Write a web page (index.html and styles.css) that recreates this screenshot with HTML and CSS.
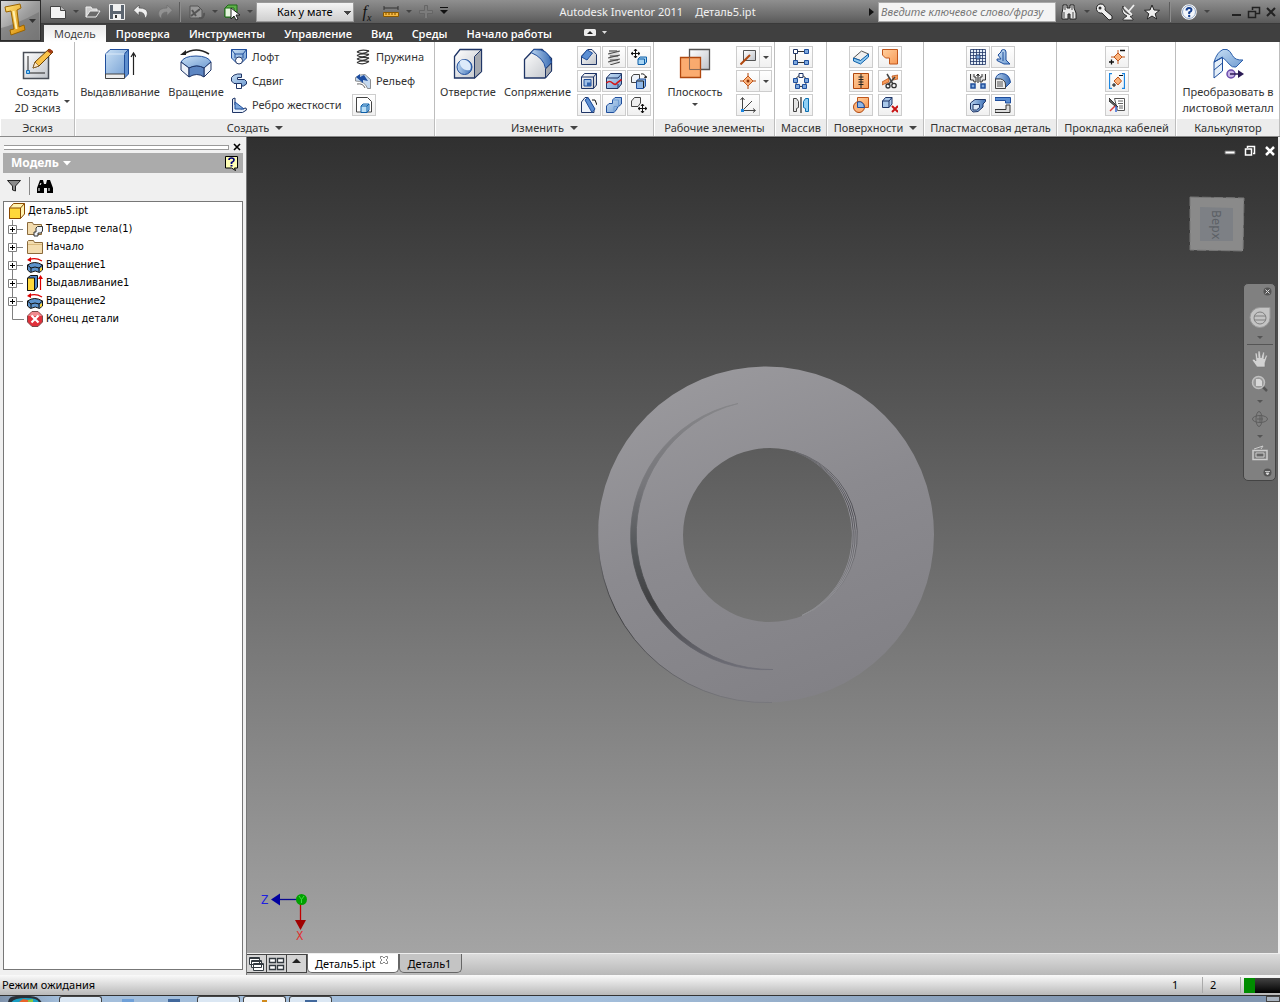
FILE: index.html
```html
<!DOCTYPE html>
<html lang="ru">
<head>
<meta charset="utf-8">
<title>Autodesk Inventor 2011 — Деталь5.ipt</title>
<link rel="stylesheet" href="styles.css">
</head>
<body>
<svg class="defs" aria-hidden="true">
  <defs>
    <linearGradient id="gBlue" x1="0" y1="0" x2="1" y2="1"><stop offset="0" stop-color="#c9e0f5"/><stop offset="1" stop-color="#6f9bd1"/></linearGradient>
    <linearGradient id="gDeep" x1="0" y1="0" x2="1" y2="0"><stop offset="0" stop-color="#b9d3ef"/><stop offset="1" stop-color="#3d6fb5"/></linearGradient>
    <linearGradient id="gGrey" x1="0" y1="0" x2="1" y2="1"><stop offset="0" stop-color="#ffffff"/><stop offset="1" stop-color="#bfc3c9"/></linearGradient>
    <linearGradient id="gOrange" x1="0" y1="0" x2="1" y2="1"><stop offset="0" stop-color="#ffcf9e"/><stop offset="1" stop-color="#f89a56"/></linearGradient>
    <linearGradient id="gGold" x1="0" y1="0" x2="1" y2="1"><stop offset="0" stop-color="#ffe27a"/><stop offset="1" stop-color="#d98a00"/></linearGradient>
    <linearGradient id="gPart" x1="0.2" y1="0" x2="0.6" y2="1"><stop offset="0" stop-color="#9b9a9e"/><stop offset="0.5" stop-color="#8b8a8f"/><stop offset="1" stop-color="#828186"/></linearGradient>
    <linearGradient id="gGroove" x1="0" y1="0" x2="0" y2="1"><stop offset="0" stop-color="#858588"/><stop offset="0.3" stop-color="#77777b"/><stop offset="0.55" stop-color="#54575a"/><stop offset="0.75" stop-color="#404042"/><stop offset="1" stop-color="#6f6f78"/></linearGradient>
    <linearGradient id="gRim" x1="0" y1="0" x2="0" y2="1"><stop offset="0" stop-color="#7c7c80"/><stop offset="0.5" stop-color="#3f3f42"/><stop offset="1" stop-color="#77777c"/></linearGradient>
    <linearGradient id="gThread" x1="0" y1="0" x2="0" y2="1"><stop offset="0" stop-color="#6a6a6e"/><stop offset="0.35" stop-color="#3c3c42"/><stop offset="0.65" stop-color="#66666b"/><stop offset="1" stop-color="#909094"/></linearGradient>
  </defs>
</svg>

<header class="titlebar">
  <button class="app-button" aria-label="Меню приложения">
    <svg width="38" height="38" viewBox="0 0 38 38"><path d="M0 26Q16 22 38 10V38H0z" fill="#6f6f6f" opacity=".55"/><path d="m4 5 15-3 1 4-4 2 2 17 5-2 1 5-14 5-1-5 4-1L10 9l-5 1z" fill="url(#gGold)" stroke="#9b6400"/><path d="M12.500 9l3 18" stroke="#fff0b0" stroke-width="2"/><path d="M28 17h7l-3.500 4z" fill="#333"/></svg>
  </button>
  <nav class="quick" aria-label="Быстрый доступ">
    <button class="tool" aria-label="Новый"><svg width="16" height="16" viewBox="0 0 16 16"><path d="M.5 2.500h10l5 4v8H.5z" fill="#f4f4f4" stroke="#444"/><path d="M10.500 2.500v4h5" fill="#bbb" stroke="#444"/></svg></button>
    <button class="drop dim" aria-label="Ещё"></button>
    <button class="tool" aria-label="Открыть"><svg width="16" height="16" viewBox="0 0 16 16"><path d="M1 13V3h5l1 2h5v3" fill="#ccc" stroke="#eee"/><path d="M1 13 5 7h10l-4 6z" fill="#6a6a6a" stroke="#eee"/></svg></button>
    <button class="tool" aria-label="Сохранить"><svg width="16" height="16" viewBox="0 0 16 16"><path d="M.5.500h15v15H.5z" fill="#5c6570" stroke="#f0f0f0"/><path d="M4 1h8v6H4z" fill="#f0f0f0"/><path d="M4 10h8v5H4z" fill="#f0f0f0"/><path d="M6 11h2v3H6z" fill="#333"/></svg></button>
    <button class="tool" aria-label="Отменить"><svg width="16" height="16" viewBox="0 0 16 16"><path d="M6 1v3q8 0 8.500 5 0 3.500-3 5.500 1-6.500-5.500-6.500v3.500L.5 6.200z" fill="#efefef" stroke="#444" stroke-width=".6"/></svg></button>
    <button class="tool" aria-label="Повторить"><svg width="16" height="16" viewBox="0 0 16 16"><path d="M10 1v3q-8 0-8.500 5 0 3.500 3 5.500-1-6.500 5.500-6.500v3.500l5.500-5.300z" fill="#929292" stroke="#6b6b6b" stroke-width=".6"/></svg></button>
    <span class="split"></span>
    <button class="tool" aria-label="Эскиз"><svg width="18" height="16" viewBox="0 0 18 16"><path d="M2 2h8l4 4v8H2z" fill="#999" stroke="#555"/><path d="M3 12 12 5M4 6l4 6" stroke="#555" stroke-width="2"/><path d="M11 14a4 4 0 0 0 5-5" fill="none" stroke="#555" stroke-width="2"/></svg></button>
    <button class="drop dim" aria-label="Ещё"></button>
    <button class="tool" aria-label="Выбор"><svg width="18" height="18" viewBox="0 0 18 18"><path d="M2 5 5 2h9v9l-3 3H2z" fill="#5fb14a" stroke="#1d6b14"/><path d="M2 5h9v9H2z" fill="#e3f3dc" stroke="#1d6b14"/><path d="M8 5v11l3-3 2 4 2-1-2-4h4z" fill="#fff" stroke="#222"/></svg></button>
    <button class="drop dim" aria-label="Ещё"></button>
    <select class="combo" aria-label="Цвет"><option>Как у мате</option></select>
    <button class="tool fx" aria-label="Параметры"><i>f<sub>x</sub></i></button>
    <button class="tool" aria-label="Измерить"><svg width="16" height="16" viewBox="0 0 16 16"><path d="M1 4h14M1 2v4M15 2v4" stroke="#333"/><path d="M.5 8.500h15v4H.5z" fill="#f5b942" stroke="#8c5a00"/><path d="M3 9v2M6 9v2M9 9v2M12 9v2" stroke="#7a4a00"/></svg></button>
    <button class="drop dim" aria-label="Ещё"></button>
    <button class="tool" aria-label="Добавить"><svg width="16" height="16" viewBox="0 0 16 16"><path d="M6.500 1.500h3v5h5v3h-5v5h-3v-5h-5v-3h5z" fill="#7c7c7c" stroke="#666"/></svg></button>
    <button class="drop custom" aria-label="Настройка панели"></button>
  </nav>
  <h1 class="app-title"><span>Autodesk Inventor 2011</span><span>Деталь5.ipt</span></h1>
  <div class="info">
    <button class="drop side" aria-label="Свернуть поиск"></button>
    <input class="search" type="text" placeholder="Введите ключевое слово/фразу" aria-label="Поиск">
    <button class="tool" aria-label="Найти"><svg width="18" height="18" viewBox="0 0 18 18"><path d="M3 2h4v3h3V2h4v3l2 5v6h-6v-5H8v5H2v-6l1-5z" fill="#e8e8e8" stroke="#222"/><path d="M4 9v6M13 9v6M5 3v4M12 3v4" stroke="#444"/></svg></button>
    <button class="drop dim" aria-label="Ещё"></button>
    <button class="tool" aria-label="Вход"><svg width="18" height="18" viewBox="0 0 18 18"><path d="M5 1a4.500 4.500 0 0 1 5 6l7 6v3l-3 1-7-7A4.500 4.500 0 1 1 5 1z" fill="#efefef" stroke="#222"/><circle cx="5" cy="5" r="1.500" fill="#333"/></svg></button>
    <button class="tool" aria-label="Центр связи"><svg width="16" height="18" viewBox="0 0 16 18"><path d="M3 3q0 8 10 9l-3 1.500 3 2.500v1H3v-1l4-3Q0 10 3 3z" fill="#efefef" stroke="#222" stroke-width=".8"/><path d="M9 8l5-6M4 4l8 8" stroke="#efefef" stroke-width="1.800"/></svg></button>
    <button class="tool" aria-label="Избранное"><svg width="16" height="16" viewBox="0 0 16 16"><path d="m8 1 2 5 5.500.3-4.300 3.500L12.700 15 8 12l-4.700 3 1.500-5.200L.5 6.300 6 6z" fill="#eee" stroke="#222"/></svg></button>
    <span class="split"></span>
    <button class="tool" aria-label="Справка"><svg width="16" height="16" viewBox="0 0 16 16"><circle cx="8" cy="8" r="7" fill="#f4f7fb" stroke="#fff" stroke-width="1.500"/><circle cx="8" cy="8" r="6.500" fill="none" stroke="#8fa5c4"/><path d="M5.500 6.500q0-2.500 2.500-2.500t2.500 2q0 1.300-2.300 2.400V10" fill="none" stroke="#17408f" stroke-width="2"/><circle cx="8.200" cy="12" r="1.200" fill="#17408f"/></svg></button>
    <button class="drop dim" aria-label="Ещё"></button>
  </div>
  <div class="win">
    <button aria-label="Свернуть"><svg width="14" height="14" viewBox="0 0 14 14"><path d="M2 9h9v2H2z" fill="#222"/></svg></button>
    <button aria-label="Восстановить"><svg width="14" height="14" viewBox="0 0 14 14"><path d="M5.500 5V2.500h7v6H9M1.500 6.500h7v6h-7z" fill="none" stroke="#222" stroke-width="1.500"/></svg></button>
    <button aria-label="Закрыть"><svg width="14" height="14" viewBox="0 0 14 14"><path d="m3 3 8 8M11 3l-8 8" stroke="#222" stroke-width="2"/></svg></button>
  </div>
</header>

<nav class="tabs" aria-label="Лента">
  <button class="tab active">Модель</button>
  <button class="tab">Проверка</button>
  <button class="tab">Инструменты</button>
  <button class="tab">Управление</button>
  <button class="tab">Вид</button>
  <button class="tab">Среды</button>
  <button class="tab">Начало работы</button>
  <button class="collapse" aria-label="Свернуть ленту"><svg width="24" height="8" viewBox="0 0 24 8"><rect x="1" y="0" width="12" height="7" rx="1.500" fill="#ececec"/><path d="M4 5h6L7 2z" fill="#222"/><path d="M19 2h5l-2.500 3z" fill="#ddd"/></svg></button>
</nav>

<section class="ribbon" aria-label="Инструменты модели">
  <div class="group">
    <div class="body middle">
      <button class="big"><svg width="32" height="32" viewBox="0 0 32 32"><path d="M1.500 4.500h25v26h-25z" fill="url(#gGrey)" stroke="#4a4f58" stroke-width="1.500"/><path d="M6 8v17h17" fill="none" stroke="#222"/><path d="M4.500 22.500h3v3h-3z" fill="#8fd0f5" stroke="#0e6fc0"/><path d="m11 20 2-6L27 1l4 3-14 14z" fill="#f9c24a" stroke="#6b4206"/><path d="m11 20 2-6 4 4z" fill="#fbe8c9" stroke="#6b4206" stroke-width=".6"/><path d="m25 3 4 3 2-3-3-2z" fill="#a53b16"/></svg><span>Создать<br>2D эскиз</span><span class="tick corner"></span></button>
    </div>
    <h2>Эскиз</h2>
  </div>

  <div class="group">
    <div class="body create">
      <button class="big"><svg width="32" height="32" viewBox="0 0 32 32"><path d="M1.500 6 6 1.500h18.500l-4 4.500V30h-19z" fill="url(#gBlue)" stroke="#1f4e9c"/><path d="M20.500 6l4-4.500V26l-4 4z" fill="#5f8fce" stroke="#1f4e9c"/><path d="M1.500 6h19" stroke="#dbe9f8"/><path d="M1.500 26h19v4.500h-19z" fill="#eee" stroke="#444"/><path d="M29.500 27V6M27 9l2.500-4L32 9" fill="none" stroke="#222" stroke-width="1.200"/></svg><span>Выдавливание</span></button>
      <button class="big second"><svg width="32" height="32" viewBox="0 0 32 32"><path d="M4 6q12-8 25 0" fill="none" stroke="#222" stroke-width="1.500"/><path d="M0 7 6 2v5z" fill="#222"/><path d="M1 14q3-6 15-6t15 6l-7 6q-7-4-15 0z" fill="url(#gBlue)" stroke="#1f4e9c"/><path d="M1 14v8l8 7v-9zM31 14v8l-7 7v-9z" fill="#eef3fa" stroke="#1f3566"/><path d="M9 20q8-4 15 0v9q-7-5-15 0z" fill="#5d86c2" stroke="#1f3566"/></svg><span>Вращение</span></button>
      <div class="list">
        <button class="item"><svg width="16" height="16" viewBox="0 0 16 16"><path d="M.5.500h15V9L11 13.500H5L.5 9z" fill="url(#gBlue)" stroke="#1f4e9c"/><path d="M.5.500 4 5h8L15.500.5M4 5v4M12 5v4" fill="none" stroke="#1f4e9c"/><circle cx="8" cy="11.500" r="3.500" fill="#fff" stroke="#1f3566"/></svg>Лофт</button>
        <button class="item"><svg width="16" height="16" viewBox="0 0 16 16"><path d="M.5 4.500q2-3 6-3.500h4v3.500H6.500v2h7l2 2v2.500l-3 2H7v-2.500H3L.5 8z" fill="url(#gBlue)" stroke="#1f3566"/><path d="M5.500 10.500h5v5h-5z" fill="#fff" stroke="#1f3566"/></svg>Сдвиг</button>
        <button class="item"><svg width="16" height="16" viewBox="0 0 16 16"><path d="M1.500 2 4 1v7l6 4 5-1 .5 2-4 2.500h-10z" fill="#e8f0fa" stroke="#1f3566"/><path d="M4 5v7h9z" fill="#7ea8dc" stroke="#1f4e9c"/></svg>Ребро жесткости</button>
      </div>
      <div class="list last">
        <button class="item"><svg width="16" height="16" viewBox="0 0 16 16"><path d="M2 3q6 3 12-1M2 6.500q6 3 12-1M2 10q6 3 12-1M2 13.500q6 3 12-1M2 3q4-3 12-1M2 6.500Q6 4 14 5.500M2 10q4-2.500 12-1M2 13.500Q6 11 14 12.500" fill="none" stroke="#333" stroke-width="1.300"/></svg>Пружина</button>
        <button class="item"><svg width="16" height="16" viewBox="0 0 16 16"><path d="M.5 4.500Q5 1 10 1.500l5.500 5v9h-3Q10 8 .5 8z" fill="#c5d9ef" stroke="#777" stroke-width=".8"/><path d="m1 4 4-3v3l4-2 4 6-5-1v3z" fill="#1c4da0"/><path d="M2 11q6-1 8 4" fill="none" stroke="#666"/></svg>Рельеф</button>
        <button class="sq" aria-label="Производный компонент"><svg width="16" height="16" viewBox="0 0 16 16"><path d="M.5.500h11l4 4v10.500h-15z" fill="#fff" stroke="#444"/><path d="m5 9 2-2h6v6l-2 2.500H5z" fill="#b9def6" stroke="#0c5ea8"/><path d="M5 9h6v6.500M11 9l2-2" fill="none" stroke="#0c5ea8"/></svg></button>
      </div>
    </div>
    <h2>Создать<span class="more"></span></h2>
  </div>

  <div class="group">
    <div class="body modify">
      <button class="big"><svg width="32" height="32" viewBox="0 0 32 32"><path d="M2.500 8.500 8 1.500h21.500v22l-7 6.500h-20z" fill="url(#gGrey)" stroke="#1f3566" stroke-width="1.300"/><path d="M22.500 8.500l7-7v22l-7 6.500z" fill="#a5a9b0" stroke="#1f3566"/><circle cx="12.500" cy="19" r="7.500" fill="url(#gDeep)" stroke="#1f4e9c"/><path d="M8 13a7 7 0 0 1 10 9 8 8 0 0 1-10-9z" fill="#dceafa"/></svg><span>Отверстие</span></button>
      <button class="big wide"><svg width="32" height="32" viewBox="0 0 32 32"><path d="M2.500 11.500 12 1.500h8l9.500 9v12l-6.500 7.500h-20.500z" fill="url(#gGrey)" stroke="#1f3566" stroke-width="1.300"/><path d="M12 1.500q15-1 17.500 13l-6 6Q22 10 9 4.500z" fill="url(#gDeep)" stroke="#1f4e9c"/><path d="M23.500 21l6-6v8l-6 7z" fill="#a5a9b0" stroke="#1f3566"/></svg><span>Сопряжение</span></button>
      <div class="grid three">
        <button class="sq" aria-label="Фаска"><svg width="16" height="16" viewBox="0 0 16 16"><path d="M.5 7 7 .5h4l4.500 5V15.500H.5z" fill="url(#gGrey)" stroke="#1f3566"/><path d="M.5 8 6 .8 11.500 4 6 11z" fill="#5c8fd3" stroke="#1f4e9c"/></svg></button>
        <button class="sq" aria-label="Резьба"><svg width="16" height="16" viewBox="0 0 16 16"><path d="M3 1h10v14H3z" fill="#ddd"/><path d="m2 5 12-3M2 9l12-3M2 13l12-3M4 16l10-3M3 2h8M4 7h8M4 11h8" stroke="#444" fill="none"/></svg></button>
        <button class="sq" aria-label="Переместить тела"><svg width="16" height="16" viewBox="0 0 16 16"><path d="M4.500 0v9M0 4.500h9M3 2l1.500-2L6 2M3 7l1.500 2L6 7M2 3 0 4.500 2 6M7 3l2 1.500L7 6" fill="none" stroke="#111"/><path d="m7 10 2-2h6.500v5l-2 2.500H7z" fill="#a8d4f3" stroke="#0c5ea8"/><path d="M7 10h6.500v5.500" fill="none" stroke="#0c5ea8"/></svg></button>
        <button class="sq" aria-label="Оболочка"><svg width="16" height="16" viewBox="0 0 16 16"><path d="m.5 4 3-3.500h12V12l-3 3.500H.5z" fill="url(#gGrey)" stroke="#1f3566"/><path d="M.5 4h12v11.500M12.500 4l3-3.500" fill="none" stroke="#1f3566"/><path d="M3 6.500h7V13H3z" fill="#9fc0e8" stroke="#1f4e9c"/><path d="M6 9.500h4V13H6z" fill="#2f62ad"/></svg></button>
        <button class="sq" aria-label="Разделить"><svg width="16" height="16" viewBox="0 0 16 16"><path d="m.5 5 4-4.500h11V11l-3.500 4.500H.5z" fill="url(#gBlue)" stroke="#1f3566"/><path d="M.5 5H12l3.500-4M12 11v4" fill="none" stroke="#1f3566"/><path d="M.5 10q3-3 6 0t5-.5l4-3" fill="none" stroke="#d31818" stroke-width="1.600"/></svg></button>
        <button class="sq" aria-label="Копировать объект"><svg width="16" height="16" viewBox="0 0 16 16"><path d="m.5 4 2-2.500h6v5l-2 3h-6z" fill="#eef3fa" stroke="#444"/><path d="m5.500 8 2-2h7v7l-2 2.500h-7z" fill="#8fb7e6" stroke="#1f4e9c"/><path d="M5.500 8h7v7M10 1q4-1 5 4m-2-1 2 1 1-2" fill="none" stroke="#222"/></svg></button>
        <button class="sq" aria-label="Наклон"><svg width="16" height="16" viewBox="0 0 16 16"><path d="M.5 5 4 .5h3l6 11v4H.5z" fill="#eef3fa" stroke="#1f3566"/><path d="M4 3 7 .5 14 12l-3 3.500z" fill="#5c8fd3" stroke="#1f4e9c"/><path d="M11 3h3l2 5" fill="none" stroke="#111"/></svg></button>
        <button class="sq" aria-label="Объединить"><svg width="16" height="16" viewBox="0 0 16 16"><path d="M6.500 3 9 .5h6.500V7L11 11v1l-3 3.500H.5V9L3 6.500h3.500z" fill="url(#gBlue)" stroke="#1f4e9c"/><path d="M6.500 3h6v6.500H8v6" fill="none" stroke="#6f9bd1"/></svg></button>
        <button class="sq" aria-label="Переместить грань"><svg width="16" height="16" viewBox="0 0 16 16"><path d="m.5 4 3-3.500h6V6L7 9.500H.5z" fill="#eee" stroke="#444"/><path d="M11.500 7v9M7 11.500h9M10 9l1.500-2L13 9M10 14l1.500 2 1.500-2M9 10l-2 1.500L9 13M14 10l2 1.500-2 1.500" fill="none" stroke="#111"/></svg></button>
      </div>
    </div>
    <h2>Изменить<span class="more"></span></h2>
  </div>

  <div class="group">
    <div class="body work">
      <button class="big"><svg width="32" height="32" viewBox="0 0 32 32"><path d="M10.500 1.500h20v20h-20z" fill="url(#gGrey)" stroke="#555" stroke-width="1.300"/><path d="M1.500 9.500h20v20h-20z" fill="#fba564" fill-opacity=".92" stroke="#b0480f" stroke-width="1.300"/><path d="M10.500 9.500v12h11" fill="none" stroke="#8a6b58"/></svg><span>Плоскость</span><span class="tick"></span></button>
      <div class="list">
        <div class="pair"><button class="sq" aria-label="Ось"><svg width="16" height="16" viewBox="0 0 16 16"><path d="M3.500 1.500h12v10h-12z" fill="url(#gGrey)" stroke="#555"/><path d="M.5 15.500 10 6" stroke="#b0480f" stroke-width="2"/></svg></button><button class="sq narrow" aria-label="Варианты оси"><span class="tick"></span></button></div>
        <div class="pair"><button class="sq" aria-label="Точка"><svg width="16" height="16" viewBox="0 0 16 16"><path d="m8 3 5 5-5 5-5-5z" fill="#fbb27a" stroke="#c0561c"/><path d="M8 0v3M8 13v3M0 8h3M13 8h3" stroke="#b0480f"/><circle cx="8" cy="8" r="1.500" fill="#8d3207"/></svg></button><button class="sq narrow" aria-label="Варианты точки"><span class="tick"></span></button></div>
        <button class="sq" aria-label="ПСК"><svg width="16" height="16" viewBox="0 0 16 16"><path d="M2.500 1v12.500H15M.5 3l2-2.500 2 2.500M13 11.500l2.500 2-2.500 2M3 13 12 4" fill="none" stroke="#444"/><path d="M1 12h3v3H1z" fill="#1c86e0"/></svg></button>
      </div>
    </div>
    <h2>Рабочие элементы</h2>
  </div>

  <div class="group">
    <div class="body middle">
      <div class="list">
        <button class="sq" aria-label="Прямоугольный массив"><svg width="16" height="16" viewBox="0 0 16 16"><path d="M2.500 3v10M3 2.500h10M3 13.500h10" stroke="#333" fill="none"/><path d="M.5.500h4v4h-4z" fill="#fff" stroke="#1f3566"/><path d="M11.500.5h4v4h-4zM.5 11.500h4v4h-4zM11.500 11.500h4v4h-4z" fill="#7ea8dc" stroke="#1f4e9c"/></svg></button>
        <button class="sq" aria-label="Круговой массив"><svg width="16" height="16" viewBox="0 0 16 16"><circle cx="8" cy="8" r="5.500" fill="none" stroke="#333"/><path d="M6 .5h4v4H6z" fill="#fff" stroke="#1f3566"/><path d="M.5 5.500h4v4h-4zM11.500 5.500h4v4h-4zM2.500 11.500h4v4h-4zM9.500 11.500h4v4h-4z" fill="#7ea8dc" stroke="#1f4e9c"/></svg></button>
        <button class="sq" aria-label="Зеркальное отражение"><svg width="16" height="16" viewBox="0 0 16 16"><path d="M.5 1.500h3l2 3v6l-2 1v3h-3z" fill="#e4e4e4" stroke="#444"/><path d="M15.500 1.500h-3l-2 3v6l2 1v3h3z" fill="#8fd0f5" stroke="#0c6fb0"/><path d="M8 0v16" stroke="#222" stroke-width="1.200"/></svg></button>
      </div>
    </div>
    <h2>Массив</h2>
  </div>

  <div class="group">
    <div class="body middle">
      <div class="grid two spaced">
        <button class="sq" aria-label="Толщина"><svg width="16" height="16" viewBox="0 0 16 16"><path d="m.5 9 8-7 7 3L9 12z" fill="#f0f0f0" stroke="#555"/><path d="m.5 9 7 2.500 8-6.500v3l-8 7-7-3z" fill="#8fc7ee" stroke="#0c5ea8"/></svg></button>
        <button class="sq" aria-label="Сшить"><svg width="16" height="16" viewBox="0 0 16 16"><path d="M.5.500h15v14.500h-8V9h-4l-3-3z" fill="url(#gOrange)" stroke="#c0561c"/></svg></button>
        <button class="sq" aria-label="Сшивка"><svg width="16" height="16" viewBox="0 0 16 16"><path d="M.5.500h15v15H.5z" fill="url(#gOrange)" stroke="#b0480f"/><path d="M8 1v14M5.500 4h5M5.500 6.500h5M5.500 9h5M5.500 11.500h5" stroke="#222"/></svg></button>
        <button class="sq" aria-label="Обрезать"><svg width="16" height="16" viewBox="0 0 16 16"><path d="M0 9 7 5v4l-7 3zM10 3l6-1v4l-5 1z" fill="#f89a56" stroke="#b0480f" stroke-width=".7"/><path d="m5 1 6 10M13 4l-7 8" stroke="#444" stroke-width="1.500"/><circle cx="12" cy="12.500" r="2.200" fill="none" stroke="#333" stroke-width="1.300"/><circle cx="6" cy="13" r="2" fill="none" stroke="#333" stroke-width="1.300"/></svg></button>
        <button class="sq" aria-label="Заплатка"><svg width="16" height="16" viewBox="0 0 16 16"><path d="M4.500.5h11v10h-11z" fill="url(#gOrange)" stroke="#c0561c"/><circle cx="6" cy="10" r="5.500" fill="#fbb27a" stroke="#b0480f"/><path d="M4.500 5q6-1.500 7 5.500h-7z" fill="#8fb7e6" stroke="#1f4e9c"/></svg></button>
        <button class="sq" aria-label="Удалить грань"><svg width="16" height="16" viewBox="0 0 16 16"><path d="m.5 4 3-3.500h6.500V7L7 10.500H.5z" fill="#a9c8ea" stroke="#1f3566"/><path d="M.5 4H7v6.500M7 4l3-3.500" fill="none" stroke="#1f3566"/><path d="m10 9 6 6M16 9l-6 6" stroke="#c81414" stroke-width="2"/></svg></button>
      </div>
    </div>
    <h2>Поверхности<span class="more"></span></h2>
  </div>

  <div class="group">
    <div class="body middle">
      <div class="grid two">
        <button class="sq" aria-label="Решетка"><svg width="16" height="16" viewBox="0 0 16 16"><path d="M.5.500h15v15H.5zM3.500 0v16M6.500 0v16M9.500 0v16M12.500 0v16M0 3.500h16M0 6.500h16M0 9.500h16M0 12.500h16" fill="#e4eef8" stroke="#1f3566" stroke-width=".8"/><path d="M6 6h4v4H6z" fill="#7ea8dc" stroke="#1f3566"/></svg></button>
        <button class="sq" aria-label="Бобышка"><svg width="16" height="16" viewBox="0 0 16 16"><path d="M6 3q0-2.500 2.500-2.500T11 3v8l4 4H9l-7-3.500V10h4l-3-4z" fill="url(#gBlue)" stroke="#1f4e9c"/><path d="M8 3v9" stroke="#1f4e9c"/></svg></button>
        <button class="sq" aria-label="Опора"><svg width="16" height="16" viewBox="0 0 16 16"><path d="M.5 1v6h3L4 9h2V4H4V1M15.500 1v6h-3L12 9h-2V4h2V1" fill="#e4e4e4" stroke="#333"/><path d="M8 1v9M6.500 3 8 1l1.500 2" stroke="#111" fill="none"/><path d="M1 15v-4h4v4zM11 15v-4h4v4z" fill="#7ea8dc" stroke="#1f4e9c" stroke-width="1.500"/></svg></button>
        <button class="sq" aria-label="Упор"><svg width="16" height="16" viewBox="0 0 16 16"><path d="M.5 6q1-5 6-5.500 8 0 9 9L11 14q0-8-7-8z" fill="url(#gDeep)" stroke="#1f4e9c"/><path d="M.5 6h5q5 1 5 6v3.500H.500z" fill="#eee" stroke="#444"/><path d="M2 9h6M2 11h6M2 13h6" stroke="#555"/></svg></button>
        <button class="sq" aria-label="Защелка"><svg width="16" height="16" viewBox="0 0 16 16"><path d="M.5 6 5 2.500h10.500v2L13 7v3l-5 4.500-5 .5-2.500-3z" fill="url(#gDeep)" stroke="#1f3566"/><path d="M3 7.500h6.500v3l-3 2.500H3z" fill="#dce8f6" stroke="#1f3566"/></svg></button>
        <button class="sq" aria-label="Кромка"><svg width="16" height="16" viewBox="0 0 16 16"><path d="M0 .5h15.500V6h-5V3.500H0z" fill="#5c8fd3" stroke="#1f4e9c"/><path d="M0 12.500h11V8h4v7.500H0z" fill="#ddd" stroke="#333"/></svg></button>
      </div>
    </div>
    <h2>Пластмассовая деталь</h2>
  </div>

  <div class="group">
    <div class="body middle">
      <div class="list">
        <button class="sq" aria-label="Контакт"><svg width="16" height="16" viewBox="0 0 16 16"><path d="m9 4 4 4-4 4-4-4z" fill="#fbb27a" stroke="#c0561c"/><path d="M9 1v3M9 12v3M13 8h3M2 8h3" stroke="#c0561c"/><path d="M11 1.500h5M0 13h5M2.500 10.500v5" stroke="#111" stroke-width="1.300"/></svg></button>
        <button class="sq" aria-label="Группа контактов"><svg width="16" height="16" viewBox="0 0 16 16"><path d="M3 .5H.5v15H3M13 .5h2.500v15H13" fill="none" stroke="#1c86e0" stroke-width="1.300"/><path d="m9 4 3.500 4L9 12 5 8z" fill="#fbb27a" stroke="#c0561c"/><path d="M10 2.500h4M3 12h4M5 10v4" stroke="#111"/></svg></button>
        <button class="sq" aria-label="Свойства"><svg width="16" height="16" viewBox="0 0 16 16"><path d="M5.500 1.500h10v12h-7z" fill="#fff" stroke="#555"/><path d="M9 4h5M9 6.500h5M10 9h4M10 11h4" stroke="#666"/><path d="m0 1 9 9-3-1-6-5z" fill="#666" stroke="#333"/><path d="M7 9v6" stroke="#3867d6" stroke-width="1.500"/><path d="m6 9-5 5" stroke="#d83a3a" stroke-width="1.500"/></svg></button>
      </div>
    </div>
    <h2>Прокладка кабелей</h2>
  </div>

  <div class="group">
    <div class="body middle">
      <button class="big"><svg width="32" height="32" viewBox="0 0 32 32"><path d="M2 14 10.500 9v14L2 30z" fill="#e4eef8" stroke="#1f4e9c"/><path d="M2 14Q5 4 11 1.500h4q3 1 5.500 6T31 12l-7 7q-4 1-7-3t-6.500-6.500z" fill="url(#gBlue)" stroke="#2d60ac"/><path d="M2 14 10.500 9M2 22l8.500-7" stroke="#1f4e9c"/><circle cx="19" cy="26" r="4" fill="#c7b3e6" stroke="#6a4bab" stroke-width="1.500"/><path d="M18 26h9" stroke="#2b1b55" stroke-width="1.500"/><path d="m26 22 6 4-6 4z" fill="#2b1b55"/></svg><span>Преобразовать в<br>листовой металл</span></button>
    </div>
    <h2>Калькулятор</h2>
  </div>
</section>

<main class="work-area">
  <aside class="browser" aria-label="Браузер модели">
    <div class="grip"><span class="bars"></span><button aria-label="Закрыть панель"><svg width="8" height="8" viewBox="0 0 8 8"><path d="m1 1 6 6M7 1 1 7" stroke="#000" stroke-width="1.600"/></svg></button></div>
    <div class="panel-title">
      <button class="panel-name">Модель<svg width="8" height="5" viewBox="0 0 8 5"><path d="M0 0h8L4 4.500z" fill="#fff"/></svg></button>
      <button aria-label="Справка"><svg width="14" height="15" viewBox="0 0 14 15"><path d="M.5.500h12v11.500h-3l1 2.500-4-2.500h-6z" fill="#ffffb4" stroke="#000"/><path d="M4 4q0-2 2.500-2T9 4q0 1.500-2.500 2.500v1.500" fill="none" stroke="#00007a" stroke-width="1.700"/><path d="M5.500 9h2v1.500h-2z" fill="#00007a"/></svg></button>
    </div>
    <div class="panel-tools">
      <button aria-label="Фильтр"><svg width="16" height="16" viewBox="0 0 16 16"><path d="M1.500 2.500h13L9.500 8v5l-3-1V8z" fill="#8a8a8a" stroke="#222"/></svg></button>
      <span class="rule"></span>
      <button aria-label="Найти"><svg width="16" height="16" viewBox="0 0 16 16"><path d="M3 2h3l1 4h2l1-4h3l3 8v5h-6v-5H7v5H0v-5z" fill="#000"/><path d="M2 10v3M12 10v3M4 5l-1 2" stroke="#fff"/></svg></button>
    </div>
    <ul class="tree">
      <li class="root"><svg width="16" height="16" viewBox="0 0 16 16"><path d="m.5 5 4-4.500h11V11l-4 4.500H.500z" fill="#fff3b0" stroke="#8a4a00"/><path d="M.5 5h11v10.500H.5z" fill="#ffd83a" stroke="#8a4a00"/><path d="m11.500 5 4-4.500" stroke="#8a4a00"/></svg><span>Деталь5.ipt</span></li>
      <li><svg class="node" width="20" height="18" viewBox="0 0 20 18"><path d="M8.500 0v18M9 9.500h10" stroke="#808080"/><path d="M4.500 5.500h8v8h-8z" fill="#fff" stroke="#808080"/><path d="M6 9.500h5M8.500 7v5" stroke="#000"/></svg><svg width="16" height="16" viewBox="0 0 16 16"><path d="M.5 13.500v-12h5l1 2h8v10z" fill="#f3dcae" stroke="#8a6a3c"/><path d="m9 7 1.500-1.500h5V10L14 12h-3v3H7v-4h2z" fill="#eef2f8" stroke="#333"/></svg><span>Твердые тела(1)</span></li>
      <li><svg class="node" width="20" height="18" viewBox="0 0 20 18"><path d="M8.500 0v18M9 9.500h10" stroke="#808080"/><path d="M4.500 5.500h8v8h-8z" fill="#fff" stroke="#808080"/><path d="M6 9.500h5M8.500 7v5" stroke="#000"/></svg><svg width="16" height="16" viewBox="0 0 16 16"><path d="M.5 14.500v-12l1-1h5l1 2h8v11z" fill="#f3dcae" stroke="#8a6a3c"/><path d="M1 5.500h14" stroke="#d9b97c"/></svg><span>Начало</span></li>
      <li><svg class="node" width="20" height="18" viewBox="0 0 20 18"><path d="M8.500 0v18M9 9.500h10" stroke="#808080"/><path d="M4.500 5.500h8v8h-8z" fill="#fff" stroke="#808080"/><path d="M6 9.500h5M8.500 7v5" stroke="#000"/></svg><svg width="16" height="16" viewBox="0 0 16 16"><path d="M2 3q6-3 13 1" fill="none" stroke="#d00" stroke-width="1.300"/><path d="M0 3 4 0v5z" fill="#d00"/><path d="M.5 8q7-5 15 0v5l-3 2.500q-4-3-9 0l-3-2.500z" fill="#5d93cc" stroke="#111"/><path d="M.5 8 4 11q4-2 8 0l3.500-3M4 11v4M12 11v4" fill="none" stroke="#111"/><path d="M13 11.500 15 10v3l-2 1.500z" fill="#ffd83a"/></svg><span>Вращение1</span></li>
      <li><svg class="node" width="20" height="18" viewBox="0 0 20 18"><path d="M8.500 0v18M9 9.500h10" stroke="#808080"/><path d="M4.500 5.500h8v8h-8z" fill="#fff" stroke="#808080"/><path d="M6 9.500h5M8.500 7v5" stroke="#000"/></svg><svg width="16" height="16" viewBox="0 0 16 16"><path d="m.5 3 3-2.500h7V12l-3 3.500h-7z" fill="#4f86c6" stroke="#111"/><path d="M.5 3h7v12.500h-7z" fill="#ffd83a" stroke="#111"/><path d="M13.500 15V2" stroke="#d00" stroke-width="1.200"/><path d="m11 4 2.500-4L16 4z" fill="#d00"/></svg><span>Выдавливание1</span></li>
      <li><svg class="node" width="20" height="18" viewBox="0 0 20 18"><path d="M8.500 0v18M9 9.500h10" stroke="#808080"/><path d="M4.500 5.500h8v8h-8z" fill="#fff" stroke="#808080"/><path d="M6 9.500h5M8.500 7v5" stroke="#000"/></svg><svg width="16" height="16" viewBox="0 0 16 16"><path d="M2 3q6-3 13 1" fill="none" stroke="#d00" stroke-width="1.300"/><path d="M0 3 4 0v5z" fill="#d00"/><path d="M.5 8q7-5 15 0v5l-3 2.500q-4-3-9 0l-3-2.500z" fill="#5d93cc" stroke="#111"/><path d="M.5 8 4 11q4-2 8 0l3.500-3M4 11v4M12 11v4" fill="none" stroke="#111"/><path d="M13 11.500 15 10v3l-2 1.500z" fill="#ffd83a"/></svg><span>Вращение2</span></li>
      <li><svg class="node" width="20" height="18" viewBox="0 0 20 18"><path d="M8.500 0v9.500H20" fill="none" stroke="#808080"/></svg><svg width="16" height="16" viewBox="0 0 16 16"><path d="M5 .5h6L15.500 5v6L11 15.500H5L.5 11V5z" fill="#e0303a" stroke="#7a4a4a"/><path d="M5 1h6l4 4H1z" fill="#f08a8e"/><path d="m4.500 4.500 7 7M11.500 4.500l-7 7" stroke="#fff" stroke-width="2.200"/></svg><span>Конец детали</span></li>
    </ul>
  </aside>

  <section class="view" aria-label="Графическое окно">
    <div class="canvas">
      <svg class="part" width="338" height="338" viewBox="1 0 338 338">
        <path fill-rule="evenodd" d="M169 .5a168 168 0 1 1 0 336 168 168 0 0 1 0-336zM173 82a87 87 0 1 0 0 174 87 87 0 0 0 0-174z" fill="url(#gPart)"/>
        <path d="M141 37.500A134.500 134.500 0 0 0 176 303.500A135.100 135.100 0 0 1 141 37.500z" fill="url(#gGroove)" stroke="url(#gGroove)" stroke-width=".8"/>
        <path d="M1 160A168 168 0 0 0 175 336.500" fill="none" stroke="url(#gRim)"/>
        <path d="M197 85.500A86.500 86.500 0 0 1 205 249.500A89.500 89.500 0 0 0 197 85.500z" fill="#96959a"/>
        <path d="M197 85.500A86.500 86.500 0 0 1 205 249.500M197 85.500A87.500 87.500 0 0 1 205 249.500M197 85.500A88.600 88.600 0 0 1 205 249.500" fill="none" stroke="url(#gThread)" stroke-width=".8"/>
      </svg>
      <div class="doc-win">
        <button aria-label="Свернуть документ"><svg width="14" height="12" viewBox="0 0 14 12"><path d="M2 6h10v3H2z" fill="#fff" stroke="#666"/></svg></button>
        <button aria-label="Восстановить документ"><svg width="14" height="12" viewBox="0 0 14 12"><path d="M4.500 3V1.500h7v7H10M2.500 4h6v6h-6z" fill="none" stroke="#fff" stroke-width="1.500"/></svg></button>
        <button aria-label="Закрыть документ"><svg width="14" height="12" viewBox="0 0 14 12"><path d="m3 2 8 8M11 2l-8 8" stroke="#fff" stroke-width="2.500"/></svg></button>
      </div>
      <svg class="cube" width="56" height="56" viewBox="0 0 56 56"><path d="m1 1 54 1-1 53-53-1z" fill="#8a8a8a" stroke="#777" stroke-dasharray="9 3"/><path d="m11 11 33 1v33H11z" fill="#7d8085"/><text class="cube-text" transform="translate(23 14) rotate(90)">Верх</text></svg>
      <nav class="navbar" aria-label="Навигация">
        <button class="nb-close" aria-label="Закрыть"><svg width="9" height="9" viewBox="0 0 9 9"><circle cx="4.500" cy="4.500" r="4" fill="#555"/><path d="m2.500 2.500 4 4M6.500 2.500l-4 4" stroke="#ddd"/></svg></button>
        <button class="wheel" aria-label="Штурвал"><svg width="22" height="22" viewBox="0 0 22 22"><path d="M11 .5h10v10.500A10 10 0 1 1 11 .5z" fill="#c4c4c4" stroke="#999"/><circle cx="11" cy="11" r="6" fill="none" stroke="#808080"/><path d="M5 9h12M5 13h12" stroke="#808080"/></svg></button>
        <span class="tick"></span>
        <hr>
        <button aria-label="Панорамирование"><svg width="16" height="18" viewBox="0 0 16 18"><path d="M5 17 0 10l2-1 2 2L3 3h2l1 5V1h2l1 7 2-6h1.500L12 9l2-4 1.500.5L13 13v4z" fill="#d2d2d2" stroke="#777" stroke-width=".6"/></svg></button>
        <button aria-label="Зумирование"><svg width="18" height="18" viewBox="0 0 18 18"><path d="m11 11 5 5" stroke="#555" stroke-width="2.500"/><circle cx="7.500" cy="7.500" r="6" fill="#9a9a9a" stroke="#c0c0c0" stroke-width="1.500"/><path d="M5 4h4l2 2v5H5z" fill="#d8d8d8"/></svg></button>
        <span class="tick"></span>
        <button aria-label="Орбита"><svg width="18" height="18" viewBox="0 0 18 18"><ellipse cx="9" cy="9" rx="7.500" ry="3.500" fill="none" stroke="#5e5e5e"/><ellipse cx="8" cy="9" rx="3" ry="7.500" fill="none" stroke="#5e5e5e"/><path d="M9 6v6M6 9h6" stroke="#5e5e5e"/></svg></button>
        <span class="tick"></span>
        <button aria-label="Вид на объект"><svg width="16" height="16" viewBox="0 0 16 16"><path d="m2 4 9-3-2 3" fill="none" stroke="#ccc"/><path d="M1 5.500h14v9H1z" fill="none" stroke="#ccc" stroke-width="1.500"/><path d="M4 8h8v4H4z" fill="#666" stroke="#ccc"/></svg></button>
        <button class="nb-close" aria-label="Настройка"><svg width="9" height="9" viewBox="0 0 9 9"><circle cx="4.500" cy="4.500" r="4" fill="#555"/><path d="M2 3.500h5M3 5h3L4.500 7z" stroke="#ddd" stroke-width=".8" fill="#ddd"/></svg></button>
      </nav>
      <svg class="axes" width="54" height="54" viewBox="0 0 54 54"><path d="M18 13.500h24" stroke="#0a0a90" stroke-width="1.300"/><path d="m12 13.500 9-6v12z" fill="#0000a0"/><path d="M41.500 14v20" stroke="#c00000" stroke-width="1.300"/><path d="M36 34h11l-5.500 10z" fill="#a00000"/><circle cx="42.500" cy="13.500" r="5.500" fill="#00a000"/><path d="m40 10 2.500 3.500L45 10M42.500 13.500V17" fill="none" stroke="#40e040"/><text class="axis-z" x="2" y="18">Z</text><text class="axis-x" x="37" y="54">X</text></svg>
    </div>
    <div class="docs">
      <button class="arr" aria-label="Каскад"><svg width="17" height="16" viewBox="0 0 17 16"><path d="M1.500 1.500h10v7h-10zM3.500 4.500h10v7h-10zM5.500 7.500h10v7h-10z" fill="#fff" stroke="#333a40"/><path d="M1 2.500h11M3 5.500h11M5 8.500h11" stroke="#333a40"/></svg></button>
      <button class="arr" aria-label="Мозаика"><svg width="17" height="16" viewBox="0 0 17 16"><path d="M1.500 2.500h6v4h-6zM9.500 2.500h6v4h-6zM1.500 9.500h6v4h-6zM9.500 9.500h6v4h-6z" fill="#fff" stroke="#333a40" stroke-width="1.300"/></svg></button>
      <button class="arr" aria-label="Список"><svg width="17" height="16" viewBox="0 0 17 16"><path d="M4 7h9L8.500 2.500z" fill="#222"/></svg></button>
      <button class="doc on">Деталь5.ipt<svg width="8" height="8" viewBox="0 0 8 8"><path d="M.5.500h2L4 2 5.500.5h2v2L6 4l1.500 1.500v2h-2L4 6 2.500 7.500h-2v-2L2 4 .5 2.500z" fill="none" stroke="#666" stroke-width=".8"/></svg></button>
      <button class="doc">Деталь1</button>
    </div>
  </section>
</main>

<footer>
  <div class="status">
    <span class="msg">Режим ожидания</span>
    <span class="count">1</span>
    <span class="count">2</span>
    <span class="meter"></span>
  </div>
  <div class="taskbar">
    <svg class="start" width="36" height="7" viewBox="0 0 36 7"><path d="M0 7Q0 0 8 0h14q9 0 12 7z" fill="#2a3038"/><path d="M3 7q2-5 15-5t13 5z" fill="#1b9fc4"/><path d="m11 6 4-3 5 1v3h-9z" fill="#e8632a"/><path d="M20 4l5-1v4h-5z" fill="#8cc63e"/></svg>
    <span class="task"></span>
    <span class="gapper"><i class="blob"></i><i class="blob dark"></i></span>
    <span class="task"></span>
    <span class="task lit"><i class="blob gold"></i></span>
    <span class="task"><i class="blob dark"></i></span>
    <span class="desk"></span>
  </div>
</footer>
</body>
</html>
```
FILE: styles.css
```css
* { box-sizing: border-box; }
html, body { height: 100%; }
body {
  margin: 0;
  display: flex;
  flex-direction: column;
  overflow: hidden;
  background: #f0f0f0;
  color: #333;
  font: 11px/16px "Noto Sans", "Liberation Sans", sans-serif;
}
button {
  margin: 0; padding: 0; border: 0; background: none;
  font: inherit; color: inherit;
}
svg { display: block; flex: none; }
.defs { position: absolute; width: 0; height: 0; }

/* Title bar */
.titlebar {
  position: relative;
  flex: none;
  display: flex;
  align-items: center;
  height: 24px;
  padding: 0 2px 0 46px;
  background: linear-gradient(#8f8f8f, #707070 60%, #595959);
  border-bottom: 1px solid #3a3a3a;
}
.app-button {
  position: absolute; left: 0; top: 0; z-index: 2;
  width: 41px; height: 41px;
  border: 1px solid #2b2b2b;
  background: linear-gradient(135deg, #d8d8d8, #9b9b9b 50%, #7c7c7c);
}
.quick, .info, .win { display: flex; align-items: center; flex: none; }
.tool { width: 24px; height: 22px; display: grid; place-items: center; }
.drop { width: 11px; height: 20px; display: grid; place-items: center; }
.drop::before {
  content: "";
  border: 3px solid transparent;
  border-top-color: #111;
  border-bottom: 0;
}
.drop.dim::before { border-top-color: #444; }
.drop.side::before { border: 4px solid transparent; border-left: 5px solid #111; border-right: 0; }
.drop.custom { background: linear-gradient(#111, #111) center 5px / 8px 1px no-repeat; }
.drop.custom::before { border-width: 4px; border-bottom: 0; }
.split { width: 2px; height: 20px; margin: 0 4px 0 2px; border-left: 1px solid #5d5d5d; border-right: 1px solid #8c8c8c; }
.info .split { margin: 0 6px 0 5px; }
.combo {
  width: 98px; height: 20px;
  margin: 0 1px;
  padding: 0 10px 0 20px;
  border: 1px solid #9a9a9a;
  border-radius: 0;
  appearance: none;
  background:
    linear-gradient(to bottom right, #444 50%, transparent 50%) 91px 8px / 4px 4px no-repeat,
    linear-gradient(to bottom left, #444 50%, transparent 50%) 87px 8px / 4px 4px no-repeat,
    linear-gradient(#f4f4f4, #cfcfcf);
  color: #000;
  font: inherit;
}
.fx { font: italic 16px/16px "Liberation Serif", serif; color: #111; }
.fx sub { font-size: 10px; line-height: 1px; }
.app-title {
  flex: 1;
  display: flex; justify-content: center; gap: 12px;
  margin: 0;
  font-size: 11px; font-weight: 400; line-height: 16px;
  color: #f2f2f2;
  white-space: nowrap;
}
.search {
  width: 178px; height: 20px;
  margin: 0 1px;
  padding: 2px;
  border: 1px solid #aaa;
  background: #f4f4f4;
  font: italic 11px/16px "Noto Sans", sans-serif;
}
.search::placeholder { color: #777; opacity: 1; }
.win { margin-left: 18px; gap: 3px; }

/* Ribbon tabs */
.tabs {
  flex: none;
  display: flex; align-items: flex-end; gap: 1px;
  height: 18px;
  padding-left: 44px;
  background: #404040;
  color: #fff;
}
.tab {
  height: 17px;
  padding: 0 9px;
  font: 600 11px/17px "Open Sans", sans-serif;
  white-space: nowrap;
}
.tab.active { padding: 0 10px; background: linear-gradient(#e8e8e8, #fff); color: #333; font-weight: 400; }
.collapse { margin: 0 0 5px 21px; }

/* Ribbon groups */
.ribbon {
  flex: none;
  display: grid;
  grid-template-columns: 75fr 360fr 219fr 121fr 52fr 97fr 133fr 119fr 104fr;
  background: #fff;
  border-bottom: 1px solid #8a8a8a;
}
.group {
  display: flex; flex-direction: column;
  min-width: 0;
  border-right: 1px solid #bdbdbd;
  border-left: 1px solid #fff;
}
.body { display: flex; height: 77px; padding-top: 4px; }
.middle { justify-content: center; }
.create { padding-left: 3px; }
.modify { padding-left: 2px; }
.work { padding-left: 8px; gap: 9px; }
.group h2 {
  display: flex; justify-content: center; align-items: center; gap: 6px;
  height: 17px;
  margin: 0;
  background: #ececec;
  font-size: 11px; font-weight: 400; line-height: 17px;
  white-space: nowrap;
}
.more { border: 4px solid transparent; border-top-color: #444; border-bottom: 0; }
.big {
  position: relative;
  flex: none;
  display: flex; flex-direction: column; align-items: center;
  width: 82px;
  padding-top: 2px;
  white-space: nowrap;
}
.big svg { margin-bottom: 4px; }
.second { width: 66px; margin: 0 2px; }
.modify .big { width: 60px; }
.modify .wide { width: 79px; }
.work .big { width: 64px; }
.tick { border: 3px solid transparent; border-top-color: #444; border-bottom: 0; }
.big > .tick { margin-top: 3px; }
.big > .corner { position: absolute; right: 9px; bottom: 16px; }
.list { flex: none; display: flex; flex-direction: column; gap: 2px; align-items: flex-start; }
.create .list { width: 121px; }
.create .last { width: auto; }
.item { display: flex; align-items: center; gap: 5px; height: 22px; white-space: nowrap; }
.last .item { padding-left: 3px; }
.grid { flex: none; display: grid; gap: 2px 1px; align-content: start; }
.three { grid-template-columns: repeat(3, 24px); }
.two { grid-template-columns: repeat(2, 24px); }
.spaced { column-gap: 5px; }
.sq {
  width: 24px; height: 22px;
  display: grid; place-items: center;
  border: 1px solid #cdcdcd;
  background: linear-gradient(#fff, #f0f0f0);
}
.pair { display: flex; }
.narrow { width: 13px; margin-left: -1px; }

/* Model browser */
.work-area { flex: 1; display: flex; min-height: 0; }
.browser {
  flex: none;
  display: flex; flex-direction: column;
  width: 247px;
  padding: 4px 3px 5px;
  border-right: 1px solid #777;
}
.grip { display: flex; align-items: center; gap: 4px; height: 12px; padding: 0 2px 0 1px; }
.bars { flex: 1; height: 5px; border: solid #999; border-width: 1px 1px 1px 0; background: #fff; }
.panel-title {
  display: flex; justify-content: space-between; align-items: center;
  height: 20px;
  padding: 0 4px 0 8px;
  background: #ababab;
}
.panel-name { display: flex; align-items: center; gap: 4px; color: #fff; font: 700 12px/20px "Noto Sans", sans-serif; }
.panel-tools { display: flex; align-items: center; gap: 7px; height: 25px; padding: 0 3px; margin-bottom: 3px; }
.rule { height: 18px; border-left: 1px solid #888; }
.tree {
  flex: 1;
  margin: 0; padding: 0;
  list-style: none;
  border: 1px solid #777;
  background: #fff;
  color: #000;
  font: 11px/18px "DejaVu Sans Condensed", "Noto Sans", sans-serif;
}
.tree li { display: flex; align-items: center; gap: 3px; height: 18px; }
.root { padding-left: 5px; }

/* Graphics window */
.view { flex: 1; display: flex; flex-direction: column; min-width: 0; }
.canvas {
  position: relative;
  flex: 1;
  margin-right: 2px;
  border-top: 1px solid #222;
  background: linear-gradient(#303030, #a4a4a4);
}
.part { position: absolute; left: 34%; top: 28%; }
.doc-win { position: absolute; right: 1px; top: 7px; display: flex; gap: 6px; }
.cube { position: absolute; right: 33px; top: 58px; }
.cube-text { font: 13px "DejaVu Sans Condensed", sans-serif; fill: #5c6066; }
.navbar {
  position: absolute; right: 2px; top: 145px;
  display: flex; flex-direction: column; align-items: center; gap: 7px;
  width: 33px;
  padding: 3px 0;
  border: 1px solid #444;
  border-radius: 5px;
  background: #808080;
}
.navbar hr { width: 26px; margin: -2px 0; border: 0; border-top: 1px solid #555; }
.navbar .tick { border-top-color: #555; }
.wheel { margin-top: 4px; }
.nb-close { align-self: flex-end; margin-right: 3px; }
.axes { position: absolute; left: 12px; bottom: 13px; overflow: visible; }
.axis-z, .axis-x { font: 12px "DejaVu Sans Condensed", sans-serif; }
.axis-z { fill: #2020e0; }
.axis-x { fill: #e03030; }
.docs {
  flex: none;
  display: flex;
  height: 22px;
  padding-bottom: 2px;
  border-top: 1px solid #eee;
  background: linear-gradient(#dcdcdc, #b8b8b8);
  color: #000;
}
.arr { display: grid; place-items: center; width: 20px; border: 1px solid #444; border-left-width: 0; background: #d4d4d4; }
.doc {
  display: flex; gap: 5px;
  padding: 2px 10px 0 7px;
  border: 1px solid #666;
  border-top: 0;
  border-radius: 0 0 5px 5px;
  background: #c4c4c4;
}
.doc.on { background: #fff; }

/* Status bar and taskbar */
footer { flex: none; }
.status {
  display: flex; align-items: center;
  height: 20px;
  padding-left: 2px;
  background: linear-gradient(#fafafa, #b9b9b9);
  color: #000;
}
.msg { flex: 1; }
.count { width: 38px; padding-left: 7px; border-right: 1px solid #aaa; }
.meter { width: 36px; height: 15px; margin-left: 3px; background: linear-gradient(90deg, #008c00 11px, transparent 11px), linear-gradient(#444, #000); }
.taskbar { display: flex; height: 7px; padding-left: 8px; border-top: 1px solid #333; background: linear-gradient(90deg, #7f93ac, #a3bedb 60px, #a3bedb 600px, #8095af 1100px); overflow: hidden; }
.start { margin-right: 15px; }
.task { width: 43px; margin-right: 3px; border: 1px solid #444; border-bottom: 0; border-radius: 3px 3px 0 0; background: #dbe7f3; }
.task.lit { background: #f3f6fa; }
.gapper { display: flex; justify-content: space-around; width: 92px; }
.blob { display: block; width: 12px; height: 3px; margin: 3px auto 0; background: #6fa0d8; }
.blob.dark { background: #41689c; }
.blob.gold { width: 5px; background: #d08a1c; }
.desk { width: 14px; margin-left: auto; border: 1px solid #444; background: #aab4c0; }
```
